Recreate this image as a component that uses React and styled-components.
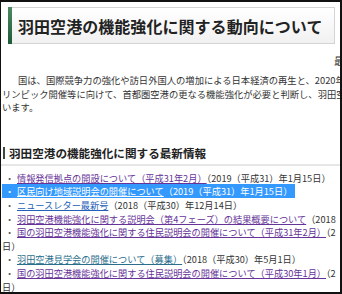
import React from "react";
import styled, { createGlobalStyle } from "styled-components";

const GlobalStyle = createGlobalStyle`
    html, body{
        margin: 0;
        padding: 0;
        background: #fff;
    }
    body{
        font-family: "Noto Sans CJK JP", "Noto Sans", sans-serif;
        color: #333;
    }
`;

const StyledFrame = styled.div`
    width: 342px;
    height: 294px;
    box-sizing: border-box;
    border: 2px solid #111;
    border-left-width: 1px;
    overflow: hidden;
    background: white;
`;

const StyledHeader = styled.div`
    display: flex;
    align-items: center;
    margin: 5px 5px 0 7px;
    height: 37px;
    box-sizing: border-box;
    border: 1px solid #d4d4d4;
    border-left: none;
    background: linear-gradient(#ffffff, #f1f1f1);
    & span.bar{
        align-self: stretch;
        width: 4px;
        margin-top: -1px;
        margin-bottom: -1px;
        background: linear-gradient(#4d8a63, #1f5a37);
    }
    & h1{
        margin: 0 0 0 6px;
        font-size: 16px;
        font-weight: 700;
        color: #222;
        white-space: nowrap;
        letter-spacing: 0.05px;
    }
`;

const StyledStamp = styled.div`
    height: 18px;
    margin-top: 8px;
    margin-right: -34px;
    font-size: 10px;
    line-height: 18px;
    text-align: right;
    color: #333;
`;

const StyledLead = styled.div`
    margin-top: 4px;
    padding-left: 1px;
    font-size: 9.3px;
    line-height: 13.6px;
    color: #333;
    & p{
        margin: 0;
        white-space: nowrap;
    }
    & p.first{
        text-indent: 16px;
    }
`;

const StyledSection = styled.div`
    margin-top: 30px;
    & h2{
        display: flex;
        align-items: center;
        gap: 4px;
        margin: 0 0 0 2px;
        font-size: 11.6px;
        font-weight: 700;
        line-height: 16px;
        color: #222;
        white-space: nowrap;
    }
    & h2::before{
        content: "";
        width: 2px;
        height: 12px;
        background: #3d4a44;
    }
    & hr{
        margin: 3px 0 0 0;
        border: none;
        height: 2px;
        background: #e6e6e6;
    }
`;

const StyledList = styled.ul`
    list-style: none;
    margin: 6px 0 0 0;
    padding: 0 0 0 1px;
    font-size: 9.2px;
    line-height: 13.6px;
    color: #333;
`;

const StyledItem = styled.li`
    white-space: nowrap;
    & span.dot{
        display: inline-block;
        width: 15px;
        text-align: center;
        color: #555;
    }
    & a{
        color: ${(p) => p.linkColor || "#663399"};
        text-decoration: underline;
        text-underline-offset: 1px;
    }
    ${(p) =>
        p.selected &&
        `
        & span.sel{
            background: #3399ff;
            color: #fff;
            padding-right: 3px;
        }
        & span.sel a, & span.sel span.dot{
            color: #fff;
        }
    `}
`;

const items = [
    { link: "情報発信拠点の開設について（平成31年2月）", rest: "（2019（平成31）年1月15日）" },
    { link: "区民向け地域説明会の開催について", rest: "（2019（平成31）年1月15日）", selected: true },
    { link: "ニュースレター最新号", rest: "（2018（平成30）年12月14日）", color: "#2360b8" },
    { link: "羽田空港機能強化に関する説明会（第4フェーズ）の結果概要について", rest: "（2018（平成30）年" },
    { link: "国の羽田空港機能強化に関する住民説明会の開催について（平成31年2月）", rest: "（2", tail: "日）" },
    { link: "羽田空港見学会の開催について（募集）", rest: "（2018（平成30）年5月1日）", color: "#2a6e8c" },
    { link: "国の羽田空港機能強化に関する住民説明会の開催について（平成30年1月）", rest: "（2", tail: "日）" },
];

const App = () => {
    return (
        <StyledFrame>
            <GlobalStyle />
            <StyledHeader>
                <span className="bar"></span>
                <h1>羽田空港の機能強化に関する動向について</h1>
            </StyledHeader>
            <StyledStamp>最終更新</StyledStamp>
            <StyledLead>
                <p className="first">国は、国際競争力の強化や訪日外国人の増加による日本経済の再生と、2020年オ</p>
                <p>リンピック開催等に向けて、首都圏空港の更なる機能強化が必要と判断し、羽田空港</p>
                <p>います。</p>
            </StyledLead>
            <StyledSection>
                <h2>羽田空港の機能強化に関する最新情報</h2>
                <hr />
            </StyledSection>
            <StyledList>
                {items.map((item, i) => (
                    <React.Fragment key={i}>
                        <StyledItem selected={item.selected} linkColor={item.color}>
                            <span className="sel">
                                <span className="dot">・</span>
                                <a href="#">{item.link}</a>
                                {item.rest}
                            </span>
                        </StyledItem>
                        {item.tail && <StyledItem>{item.tail}</StyledItem>}
                    </React.Fragment>
                ))}
            </StyledList>
        </StyledFrame>
    );
};

export default App;
